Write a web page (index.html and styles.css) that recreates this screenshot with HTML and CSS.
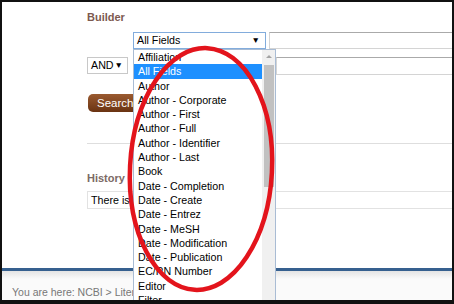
FILE: index.html
```html
<!DOCTYPE html>
<html lang="en">
<head>
  <meta charset="UTF-8" />
  <title>PubMed Advanced Search Builder</title>
  <link rel="stylesheet" href="styles.css">
</head>
<body>
  <div class="frame">
    <div class="builder">
      <h2>Builder</h2>

      <div class="row">
        <div class="select field-select focused">All Fields <span class="arrow">▼</span></div>
        <div class="text-input"></div>
      </div>

      <div class="row">
        <div class="select bool-select">AND <span class="arrow">▼</span></div>
        <div class="select field-select wide">All Fields <span class="arrow">▼</span></div>
        <div class="text-input"></div>
      </div>

      <button class="search-btn">Search</button>

      <hr class="sep">

      <h2 class="history-title">History</h2>
      <div class="history-box">There is no recent history</div>
    </div>

    <div class="footer">
      You are here: NCBI &gt; Literature &gt; PubMed
    </div>

    <!-- open dropdown of the first field select -->
    <div class="dropdown">
      <ul class="options">
        <li>Affiliation</li>
        <li class="selected">All Fields</li>
        <li>Author</li>
        <li>Author - Corporate</li>
        <li>Author - First</li>
        <li>Author - Full</li>
        <li>Author - Identifier</li>
        <li>Author - Last</li>
        <li>Book</li>
        <li>Date - Completion</li>
        <li>Date - Create</li>
        <li>Date - Entrez</li>
        <li>Date - MeSH</li>
        <li>Date - Modification</li>
        <li>Date - Publication</li>
        <li>EC/RN Number</li>
        <li>Editor</li>
        <li>Filter</li>
      </ul>
      <div class="scrollbar">
        <div class="scroll-up"></div>
        <div class="scroll-thumb"></div>
      </div>
    </div>

    <!-- red marker circle drawn over the screenshot -->
    <svg class="marker" width="450" height="298" viewBox="0 0 450 298">
      <ellipse cx="199" cy="167" rx="71" ry="121" transform="rotate(3 199 167)"
               fill="none" stroke="#e3141c" stroke-width="4.5"/>
    </svg>
  </div>
</body>
</html>
```

FILE: styles.css
```css
* { box-sizing: border-box; margin: 0; padding: 0; }
body {
  background: #000;
  font-family: "Liberation Sans", Arial, sans-serif;
}
.frame {
  position: relative;
  width: 454px;
  height: 304px;
  border: 2px solid #111;
  border-bottom-width: 4px;
  background: #fff;
  overflow: hidden;
  display: flex;
  flex-direction: column;
}
.builder {
  padding-left: 85px;
  margin-right: -30px;
}
h2 {
  font-size: 11px;
  line-height: 14px;
  font-weight: bold;
  color: #7d5a4f;
  margin-top: 8px;
}
.row {
  display: flex;
  margin-top: 8px;
}
.select {
  position: relative;
  height: 17px;
  border: 1px solid #c8c8c8;
  background: #fff;
  font-size: 10.7px;
  line-height: 15px;
  padding-left: 3px;
  color: #000;
}
.select .arrow {
  position: absolute;
  right: 5px;
  top: 0;
  font-size: 8.5px;
}
.field-select {
  width: 133px;
  margin-left: 46px;
}
.field-select.focused {
  border-color: #82acdc;
}
.field-select.wide {
  width: 140px;
  margin-left: 5px;
}
.bool-select {
  width: 41px;
}
.bool-select .arrow {
  right: 4px;
}
.text-input {
  flex: 1;
  height: 17px;
  margin-left: 3px;
  border: 1px solid #d4d4d4;
  border-top-color: #aaa;
}
.row + .row .text-input {
  height: 18px;
}
.search-btn {
  display: block;
  margin-top: 19px;
  margin-left: 1px;
  width: 60px;
  height: 18px;
  border: none;
  border-radius: 5px;
  background: linear-gradient(#9a5a30, #6a3312);
  color: #fff;
  font-family: "Liberation Sans", Arial, sans-serif;
  font-size: 11.5px;
  text-align: left;
  padding-left: 9px;
}
.sep {
  border: none;
  border-top: 1px solid #dedede;
  margin-top: 31px;
}
.history-title {
  margin-top: 27px;
  color: #7c6a65;
}
.history-box {
  margin-top: 6px;
  height: 18px;
  border: 1px solid #e2e2e2;
  font-size: 10.7px;
  line-height: 16px;
  padding-left: 3px;
}
.footer {
  margin-top: auto;
  height: 32px;
  border-top: 3px solid #36608f;
  background: linear-gradient(#e4e4e4, #fafafa 8px, #fafafa);
  font-size: 10.5px;
  line-height: 14px;
  padding: 14px 0 0 10px;
  color: #777;
  white-space: nowrap;
}
.dropdown {
  position: absolute;
  left: 131px;
  top: 47px;
  width: 143px;
  height: 260px;
  display: flex;
  background: #fff;
  border: 1px solid #a9bcd4;
  border-bottom: none;
}
.options {
  list-style: none;
  flex: 1;
}
.options li {
  height: 14.3px;
  line-height: 14.3px;
  font-size: 10.7px;
  padding-left: 4px;
  color: #000;
  white-space: nowrap;
}
.options li.selected {
  background: #1e90ff;
  color: #fff;
}
.scrollbar {
  width: 13px;
  background: #f0f0f0;
  padding-top: 5px;
}
.scroll-up {
  width: 0;
  height: 0;
  margin: 0 auto;
  border-left: 3px solid transparent;
  border-right: 3px solid transparent;
  border-bottom: 3px solid #a3a3a3;
}
.scroll-thumb {
  width: 10px;
  height: 122px;
  margin: 7px auto 0;
  background: #c1c1c1;
}
.marker {
  position: absolute;
  left: 0;
  top: 0;
  pointer-events: none;
}
```
